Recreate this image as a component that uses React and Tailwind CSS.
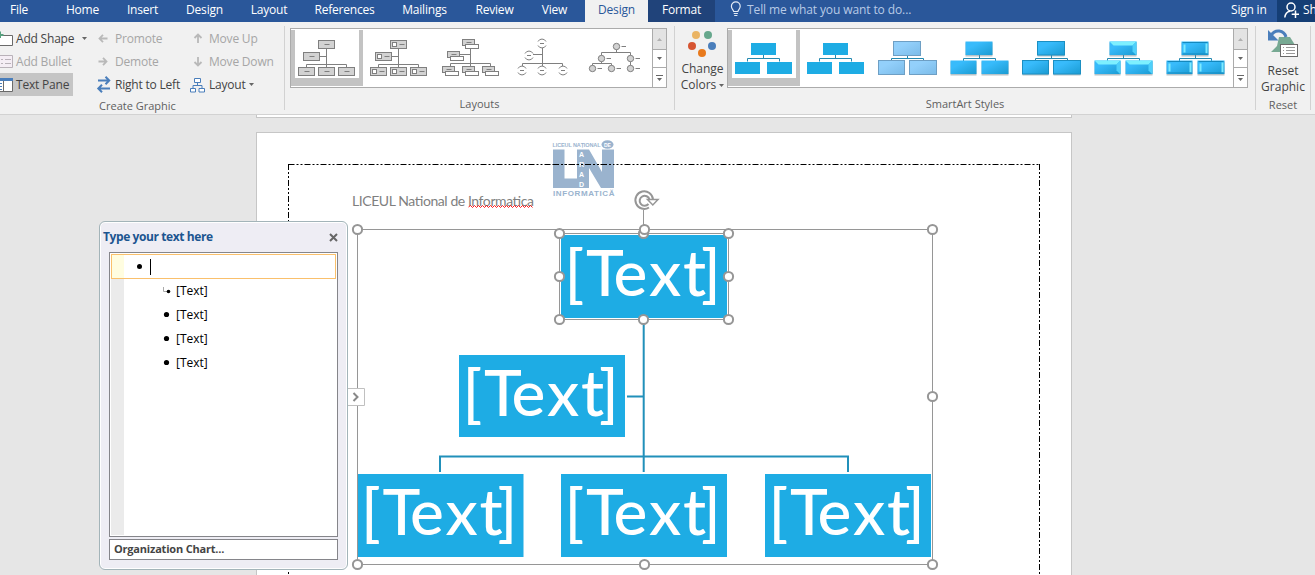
import React from "react";

const TABS = [
  ["File", "w-[38px] mr-[14px]", "tracking-[-0.2px]"],
  ["Home", "w-[61px]", "tracking-[-0.2px]"],
  ["Insert", "w-[59px]", "tracking-[-0.2px]"],
  ["Design", "w-[65px]", "tracking-[-0.2px]"],
  ["Layout", "w-[64px]", "tracking-[-0.2px]"],
  ["References", "w-[87px]", "tracking-[-0.2px]"],
  ["Mailings", "w-[73px]", "tracking-[-0.2px]"],
  ["Review", "w-[67px]", "tracking-[-0.2px]"],
  ["View", "w-[53px] mr-[4px]", "tracking-[-0.2px]"],
];

function Header() {
  return (
    <header className="flex h-[22px] w-full shrink-0 items-stretch bg-[#2a579a] text-[12px] leading-[20px] text-white">
      {TABS.map(([label, w, t], i) => (
        <div key={i} className={`shrink-0 text-center ${w} ${t}`}>{label}</div>
      ))}
      <div className="w-[63px] shrink-0 bg-[#f1f1f1] text-center tracking-[-0.2px] text-[#2a579a]">Design</div>
      <div className="w-[67px] shrink-0 bg-[#20437a] text-center tracking-[-0.2px]">Format</div>
      <svg className="ml-[15px] mt-[1px] h-[17px] w-[12px] shrink-0" viewBox="0 0 12 17" fill="none" stroke="#e4ebf5" strokeWidth="1.2">
        <path d="M3.7 10.5C3.5 8.7 1.4 8 1.4 5.3a4.4 4.4 0 0 1 8.8 0C10.200 8 8.100 8.700 7.900 10.500Z M3.700 12.500H7.900 M4.200 14.500H7.400" />
      </svg>
      <div className="ml-[5px] w-[480px] shrink-0 tracking-[-0.1px] text-[#b8cae6]">Tell me what you want to do...</div>
      <div className="ml-[4px] w-[46px] shrink-0 tracking-[-0.2px]">Sign in</div>
      <div className="flex flex-1 overflow-hidden bg-[#153e75] whitespace-nowrap">
        <svg className="ml-[7px] mt-[2px] h-[17px] w-[16px] shrink-0" viewBox="0 0 16 17" fill="none" stroke="#fff" strokeWidth="1.5">
          <circle cx="7" cy="5" r="4" />
          <path d="M0.800 15.500C1.200 11.500 3 9.700 6 9.200 M11.500 8.500V16 M7.700 12.200H15" />
        </svg>
        <span className="ml-[3px]">Share</span>
      </div>
    </header>
  );
}

const Caret = ({ className = "" }) => (
  <svg className={`h-[3px] w-[5px] shrink-0 ${className}`} viewBox="0 0 5 3"><path d="M0 0H5L2.500 3Z" fill="#666" /></svg>
);

const ARROWS = {
  left: "M9.500 5.500H1.500 M5 1.800L1.500 5.500L5 9.200",
  right: "M0.500 5.500H8.500 M5 1.800L8.500 5.500L5 9.200",
  up: "M5 10V1.500 M1.500 5L5 1.500L8.500 5",
  down: "M5 1V9.500 M1.500 6L5 9.500L8.500 6",
};
const Arrow = ({ dir }) => (
  <svg className="h-[11px] w-[10px]" viewBox="0 0 10 11" fill="none" stroke="#b9b9b9" strokeWidth="1.8"><path d={ARROWS[dir]} /></svg>
);

function CreateGraphic() {
  const row = "flex h-[23px] items-center whitespace-nowrap";
  return (
    <section className="flex w-[285px] shrink-0 flex-col">
      <div className="flex h-[72px] pt-[3px] text-[12px] text-[#444]">
        <div className="w-[98px]">
          <div className={row}>
            <svg className="h-[16px] w-[13px]" viewBox="0 0 13 16"><path d="M0 4.500H12.500V14.500H0" fill="#fff" stroke="#6a6a6a" /><path d="M0 0.500V7 M0 4H3.500" stroke="#57a07e" strokeWidth="2" /></svg>
            <span className="ml-[3px] w-[66px] tracking-[-0.2px]">Add Shape</span>
            <Caret className="" />
          </div>
          <div className={`${row} text-[#a6a6a6]`}>
            <svg className="h-[15px] w-[13px]" viewBox="0 0 13 15"><path d="M0 1.500H12.500V13.500H0" fill="#f5eef5" stroke="#b9b2b9" /><path d="M1 5.500H3 M5 5.500H11 M1 9.500H3 M5 9.500H11" stroke="#b9b2b9" /></svg>
            <span className="ml-[3px] tracking-[-0.2px]">Add Bullet</span>
          </div>
          <div className={`${row} w-[73px] bg-[#c5c5c5]`}>
            <svg className="h-[16px] w-[13px]" viewBox="0 0 13 16"><path d="M0 1.500H12.500V14.500H0" fill="#fff" stroke="#6a6a6a" /><path d="M0 2.500H13" stroke="#4a7ebb" strokeWidth="3" /><path d="M3.500 4V14" stroke="#6a6a6a" /><path d="M0 6.500H2 M0 9.500H2 M0 12.500H2" stroke="#4a7ebb" /></svg>
            <span className="ml-[3px] tracking-[-0.2px]">Text Pane</span>
          </div>
        </div>
        <div className="w-[93px]">
          <div className={`${row} text-[#a6a6a6]`}><div className="w-[17px]"><Arrow dir="left" /></div><span className="tracking-[-0.2px]">Promote</span></div>
          <div className={`${row} text-[#a6a6a6]`}><div className="w-[17px]"><Arrow dir="right" /></div><span className="tracking-[-0.2px]">Demote</span></div>
          <div className={row}>
            <svg className="-ml-[2px] mr-[3px] h-[17px] w-[16px]" viewBox="0 0 16 17" fill="none" stroke="#4a7ebb" strokeWidth="2"><path d="M2 4.500H13 M9.500 0.800L13.200 4.500L9.500 8.200 M14 12.500H2 M6 8.800L2.300 12.500L6 16.200" /></svg>
            <span className="tracking-[-0.2px]">Right to Left</span>
          </div>
        </div>
        <div className="flex-1">
          <div className={`${row} text-[#a6a6a6]`}><div className="ml-[2px] w-[16px]"><Arrow dir="up" /></div><span className="tracking-[-0.2px]">Move Up</span></div>
          <div className={`${row} text-[#a6a6a6]`}><div className="ml-[2px] w-[16px]"><Arrow dir="down" /></div><span className="tracking-[-0.2px]">Move Down</span></div>
          <div className={row}>
            <svg className="-ml-[1px] mr-[4px] h-[16px] w-[15px]" viewBox="0 0 15 16" fill="#fff" stroke="#4a7ebb"><path d="M7.500 5V9 M3 11V8.500H12V11" fill="none" /><path d="M4.500 1.500H10.500V5.500H4.500Z M0.500 11.500H5.500V15H0.500Z M9 11.500H14.500V15H9Z" /></svg>
            <span className="mr-[3px] tracking-[-0.2px]">Layout</span>
            <Caret />
          </div>
        </div>
      </div>
      <div className="pr-[10px] text-center text-[11px] leading-[20px] text-[#5f5f5f]">Create Graphic</div>
    </section>
  );
}

function LayoutThumb({ kind }) {
  const boxes = [[27.5, 10.5], [12.5, 22.5], [7.5, 37.5], [27.5, 37.5], [47.5, 37.5]];
  if (kind < 2)
    return (
      <g stroke="#7f7f7f" fill="#d2d2d2">
        <path d="M35.500 19V37 M15.500 37V34.500H55.500V37 M29 26.500H35" fill="none" />
        {boxes.map(([x, y], i) => (
          <g key={i}>
            <rect x={x} y={y} width="16" height="8" />
            {kind === 1 && <rect x={x + 2} y={y + 2} width="4" height="4" fill="#fff" />}
            <path d={kind ? `M${x + 9} ${y + 4}h5` : `M${x + 6} ${y + 4}h5`} />
          </g>
        ))}
      </g>
    );
  if (kind === 2)
    return (
      <g stroke="#7f7f7f" fill="#d2d2d2">
        <path d="M35.500 17V36 M15.500 36V33.500H55.500V36 M25 24.500H35" fill="none" />
        {[[27.5, 9.5], [12.5, 21.5], [7.5, 36.5], [27.5, 36.5], [47.5, 36.5]].map(([x, y], i) => (
          <g key={i}>
            <rect x={x} y={y} width="12" height="6" />
            <path d={`M${x + 4} ${y + 3}h5`} />
            <rect x={x + 3} y={y + 5} width="13" height="4" fill="#fff" />
          </g>
        ))}
      </g>
    );
  if (kind === 3)
    return (
      <g stroke="#7f7f7f" fill="none">
        <path d="M35.500 18V36 M15.500 36V33.500H55.500V36 M26 24.500H35" />
        {[[35, 13.5], [22, 25.5], [15, 40.5], [35, 40.5], [56, 40.5]].map(([x, y], i) => (
          <path key={i} d={`M${x - 4} ${y - 2}a4.500 4.500 0 0 1 8 0 M${x - 4} ${y + 2}a4.500 4.500 0 0 0 8 0 M${x - 2} ${y}h4`} />
        ))}
      </g>
    );
  return (
    <g stroke="#7f7f7f" fill="#d2d2d2">
      <path d="M37.500 19V22.500 M22.500 26V22.500H51.500V37 M22.500 30V33.500 M13.500 36V33.500H32.500V36" fill="none" />
      {[[37.5, 16.5], [22.5, 28.5], [51.5, 28.5], [13.5, 38.5], [32.5, 38.5], [51.5, 38.5]].map(([x, y], i) => (
        <g key={i}><circle cx={x} cy={y} r="3.200" /><path d={`M${x + 5} ${y}h4.500`} /></g>
      ))}
    </g>
  );
}

function StyleThumb({ kind }) {
  const fill = ["#1eace4", "#1eace4", "url(#pale)", "url(#glow)", "url(#glow)", "url(#glow)", "url(#glow)"][kind];
  const flat = kind < 2;
  const boxes = flat
    ? [[23, 13, 25, 12], [7, 32, 25, 12], [39, 32, 25, 12]]
    : [[21.5, 11.5, 27, 14], [6.5, 30.500, 26, 14], [37.5, 30.500, 27, 14]];
  return (
    <g>
      <path d="M35.500 25V28.500 M19.500 31.500V28.500H51.500V31.500" fill="none" stroke="#2489b0" />
      {boxes.map(([x, y, w, h], i) => (
        <g key={i}>
          {kind > 2 && <rect x={x} y={y + 1} width={w} height={h} fill="#6f8792" opacity="0.500" />}
          <rect x={x} y={y} width={w} height={h - (kind > 2 ? 0.500 : 0)} fill={fill} stroke={kind === 2 ? "#6e9fc4" : kind === 4 ? "#1b8fc2" : "none"} />
          {kind === 5 && <path d={`M${x} ${y}h${w}l-4 4h${8 - w}Z`} fill="#7df0ff" />}
          {kind === 5 && <path d={`M${x + w} ${y}v${h}l-4 -4v-6Z`} fill="#4fd0fa" />}
          {kind === 6 && <path d={`M${x + 3} ${y + 3}v${h - 6} M${x + w - 2} ${y + 2}v${h - 4}`} stroke="#7deaff" strokeWidth="2" />}
          {kind === 6 && <path d={`M${x + 1} ${y + 1}h${w - 2} M${x + 1} ${y + h - 1.500}h${w - 2}`} stroke="#1488bd" />}
        </g>
      ))}
    </g>
  );
}

function Gallery({ count, Thumb, className }) {
  return (
    <div className={`flex h-[60px] border border-[#ababab] bg-white ${className}`}>
      <div className="flex flex-1 pt-[1px]">
        {Array.from({ length: count }, (_, i) => (
          <div key={i} className={`h-[56px] w-[72px] shrink-0 ${i === 0 ? "bg-[#c3c3c3] p-[4px]" : "p-[4px]"}`}>
            <div className="h-full w-full bg-white">
              <svg className="-mt-[4px] -ml-[4px] h-[56px] w-[72px] max-w-none overflow-visible" viewBox="0 0 72 56">
                <Thumb kind={i} />
              </svg>
            </div>
          </div>
        ))}
      </div>
      <div className="flex w-[14px] shrink-0 flex-col border-l border-[#ababab]">
        <div className="flex h-[20px] items-center justify-center bg-[#e3e3e3]"><svg className="h-[3px] w-[5px]" viewBox="0 0 5 3"><path d="M0 3H5L2.500 0Z" fill="#b0b0b0" /></svg></div>
        <div className="flex h-[19px] items-center justify-center border-y border-[#ababab]"><Caret /></div>
        <div className="flex flex-1 flex-col items-center justify-center gap-[2px]"><div className="h-px w-[7px] bg-[#666]" /><Caret /></div>
      </div>
    </div>
  );
}

function Ribbon() {
  return (
    <div className="flex h-[93px] w-full shrink-0 border-b border-[#d2d2d2] bg-[#f1f1f1] pt-[2px]">
      <svg className="absolute h-0 w-0">
        <defs>
          <linearGradient id="pale" x1="0" y1="0" x2="1" y2="1"><stop offset="0.300" stopColor="#93d0fb" /><stop offset="1" stopColor="#7bbbe8" /></linearGradient>
          <linearGradient id="glow" x1="0" y1="0" x2="1" y2="1"><stop offset="0.300" stopColor="#38bbfb" /><stop offset="1" stopColor="#1a9bd2" /></linearGradient>
        </defs>
      </svg>
      <CreateGraphic />
      <div className="-ml-px mt-[2px] h-[84px] w-px shrink-0 bg-[#d2d2d2]" />
      <section className="flex w-[389px] shrink-0 flex-col">
        <div className="h-[72px] pl-[5px] pt-[4px]"><Gallery count={5} Thumb={LayoutThumb} className="w-[377px]" /></div>
        <div className="text-center text-[11px] leading-[20px] text-[#5f5f5f]">Layouts</div>
      </section>
      <div className="mt-[2px] h-[84px] w-px shrink-0 bg-[#d2d2d2]" />
      <section className="flex w-[580px] shrink-0 flex-col">
        <div className="flex h-[72px]">
          <div className="flex w-[52px] flex-col items-center pt-[6px] text-[12px] leading-[16px] text-[#444]">
            <svg className="mb-[3px] h-[28px] w-[30px] shrink-0" viewBox="0 0 30 28"><circle cx="10" cy="5" r="4" fill="#eab464" /><circle cx="22" cy="5" r="4" fill="#66a78c" /><circle cx="6" cy="16" r="4" fill="#d65532" /><circle cx="26" cy="16" r="4" fill="#4a7ebb" /><circle cx="16" cy="23" r="4" fill="#e87a1d" /></svg>
            <span className="ml-[3px]">Change</span>
            <span className="ml-[3px] flex items-center gap-[3px]">Colors <Caret /></span>
          </div>
          <div className="pt-[4px]"><Gallery count={7} Thumb={StyleThumb} className="w-[521px]" /></div>
        </div>
        <div className="text-center text-[11px] leading-[20px] text-[#5f5f5f]">SmartArt Styles</div>
      </section>
      <div className="mt-[2px] h-[84px] w-px shrink-0 bg-[#d2d2d2]" />
      <section className="flex w-[54px] shrink-0 flex-col items-center">
        <div className="flex h-[72px] flex-col items-center pt-[4px] text-[12px] leading-[16px] text-[#444]">
          <svg className="mb-[5px] h-[30px] w-[32px] shrink-0" viewBox="0 0 32 30">
            <path d="M12 9H23L28 17V24H4L10 18Z" fill="#77a993" />
            <path d="M19 9C17 2 8 0.500 4 7.500" fill="none" stroke="#4a7ebb" strokeWidth="3" />
            <path d="M1 2V12.500H11.500Z" fill="#4a7ebb" />
            <rect x="13.500" y="16.500" width="17" height="12" fill="#fff" stroke="#6a6a6a" />
            <path d="M16 19.500H17 M19 19.500H28 M16 22.500H17 M19 22.500H28 M16 25.500H17 M19 25.500H28" stroke="#999" />
          </svg>
          <span>Reset</span><span>Graphic</span>
        </div>
        <div className="text-[11px] leading-[20px] text-[#5f5f5f]">Reset</div>
      </section>
      <div className="mt-[2px] h-[84px] w-px shrink-0 bg-[#d2d2d2]" />
    </div>
  );
}

function TextPane() {
  return (
    <aside className="absolute left-[99px] top-[106px] flex h-[349px] w-[249px] flex-col rounded-[6px] border border-[#a3b4b9] bg-[#eeedf4] px-[9px] shadow-[inset_0_0_0_1px_#fff]">
      <div className="-ml-[6px] flex h-[30px] items-center justify-between text-[12px] font-bold text-[#1c5590]">
        <span className="tracking-[-0.4px]">Type your text here</span>
        <svg className="h-[9px] w-[9px]" viewBox="0 0 9 9"><path d="M1 1L8 8M8 1L1 8" stroke="#666" strokeWidth="2" /></svg>
      </div>
      <div className="flex h-[285px] w-[229px] flex-col border border-[#85858a] bg-white p-px text-[12px] text-black">
        <div className="flex h-[25px] shrink-0 items-center border border-[#fac06c] bg-[linear-gradient(to_right,#fffde0_12px,#fff_12px)] pl-[25px]">
          <span className="h-[5px] w-[5px] rounded-full bg-black" />
          <span className="ml-[8px] h-[16px] w-px bg-black" />
        </div>
        <div className="flex-1 bg-[linear-gradient(to_right,#ebebeb_13px,#fff_13px)]">
          {[0, 1, 2, 3].map((i) => (
            <div key={i} className="flex h-[24px] items-center pl-[51px]">
              <svg className="mr-[4px] h-[8px] w-[10px]" viewBox="0 0 10 8">
                {i === 0 ? <><path d="M1.500 0V4.500H5" fill="none" stroke="#aaa" /><circle cx="6.500" cy="4.500" r="1.800" /></> : <circle cx="4.500" cy="3.500" r="2.600" />}
              </svg>
              <span>[Text]</span>
            </div>
          ))}
        </div>
      </div>
      <div className="mt-[2px] flex h-[21px] w-[229px] items-center border border-[#85858a] bg-white pl-[4px] text-[11px] font-bold text-[#444]">
        <span className="tracking-[-0.2px]">Organization Chart...</span>
      </div>
    </aside>
  );
}

const Handle = ({ x, y }) => <circle cx={x} cy={y} r="4.600" fill="#fff" stroke="#969696" strokeWidth="2" />;

function Node({ x, y, w = 166, h = 83 }) {
  return (
    <g>
      <rect x={x} y={y} width={w} height={h} fill="#1eace4" />
      <text x={[3.5, 25, 52.5, 88, 122, 140].map((d) => x + d).join(" ")} y={y + 61} fill="#fff" fontFamily="Lato, sans-serif" fontWeight="500" fontSize="64">[Text]</text>
    </g>
  );
}

function Diagram() {
  return (
    <svg className="absolute left-0 top-0 h-[460px] w-[1315px]" viewBox="0 115 1315 460">
      <path d="M288.500 164.500H1040" stroke="#000" fill="none" strokeDasharray="6 2 2 2 2 2" />
      <path d="M288.500 164V575 M1039.500 164V575" stroke="#000" fill="none" strokeDasharray="6 2 2 2 2 2" />
      <g fill="#9ab3ce" fontFamily="Liberation Sans, sans-serif" fontWeight="700">
        <text x="552.500" y="147" fontSize="5.500" textLength="48">LICEUL NAȚIONAL</text>
        <ellipse cx="607.500" cy="144.500" rx="6" ry="4.300" />
        <path d="M553 149.500H564.500V178.500H577V149.500H589L602 172V149.500H614V188H601L589 168V188H553Z" />
        <text x="553" y="196" fontSize="8" textLength="61.500">INFORMATICĂ</text>
        <g fill="#fff" fontSize="7"><text x="579" y="157">A</text><text x="579" y="167">R</text><text x="579" y="177">A</text><text x="579" y="186.500">D</text><text x="604" y="146.500" fontSize="5">DE</text></g>
      </g>
      <path d="M553 164.500H614" stroke="#000" strokeDasharray="6 2 2 2 2 2" />
      <text x="352" y="205.500" fill="#7f7f7f" fontFamily="Lato, sans-serif" fontSize="14" textLength="182">LICEUL National de Informatica</text>
      <path d="M468.500 207l2-1.500l2 2l2-2l2 2l2-2l2 2l2-2l2 2l2-2l2 2l2-2l2 2l2-2l2 2l2-2l2 2l2-2l2 2l2-2l2 2l2-2l2 2l2-2l2 2l2-2l2 2l2-2l2 2l2-2l2 2l2-2l2 2" fill="none" stroke="#f00" strokeWidth="0.900" />

      <path d="M643.700 320V472 M627 396.500H643 M440 472V456.500H848V472" stroke="#2190ba" strokeWidth="2" fill="none" />
      <Node x={561} y={235} />
      <Node x={459} y={355} h={82} />
      <Node x={357.500} y={474} />
      <Node x={561} y={474} />
      <Node x={765} y={474} />
      <g fill="none" stroke="#969696">
        <path d="M357.500 229.500H932.500V564.500H357.500Z M559.500 233.500H728.500V319.500H559.500Z M643.500 210V230" />
      </g>
      {[[559.5, 233.5], [643.5, 233.5], [728.5, 233.5], [559.5, 276.5], [728.5, 276.5], [559.5, 319.5], [643.5, 319.5], [728.5, 319.5], [357.5, 229.5], [644.5, 229.5], [932.5, 229.5], [932.5, 396.5], [357.5, 564.5], [644.5, 564.5], [932.5, 564.5]].map(([x, y]) => <Handle key={`${x}-${y}`} x={x} y={y} />)}
      <g fill="none" stroke="#969696">
        <path d="M649 207.500A8.800 8.800 0 1 1 653 199.500 M648.500 204A5 5 0 1 1 649.500 199.500" strokeWidth="2" />
        <path d="M647.500 199.500H658L652.800 205Z" strokeWidth="1.500" fill="#fff" />
      </g>
      <path d="M348 388.500H364.500V405.500H348" fill="#fff" stroke="#c0c0c0" />
      <path d="M353.500 393L357.500 397L353.500 401" fill="none" stroke="#888" strokeWidth="2" />
    </svg>
  );
}

export default function App() {
  return (
    <div className="flex h-[575px] w-[1315px] flex-col overflow-hidden bg-[#e6e6e6] font-['Open_Sans','Noto_Sans',sans-serif]">
      <Header />
      <Ribbon />
      <main className="relative flex flex-1 flex-col pl-[256px]">
        <div className="h-[3px] w-[816px] border-x border-b border-[#c6c6c6] bg-white" />
        <div className="mt-[14px] w-[816px] flex-1 border-x border-t border-[#c6c6c6] bg-white" />
        <Diagram />
        <TextPane />
      </main>
    </div>
  );
}
